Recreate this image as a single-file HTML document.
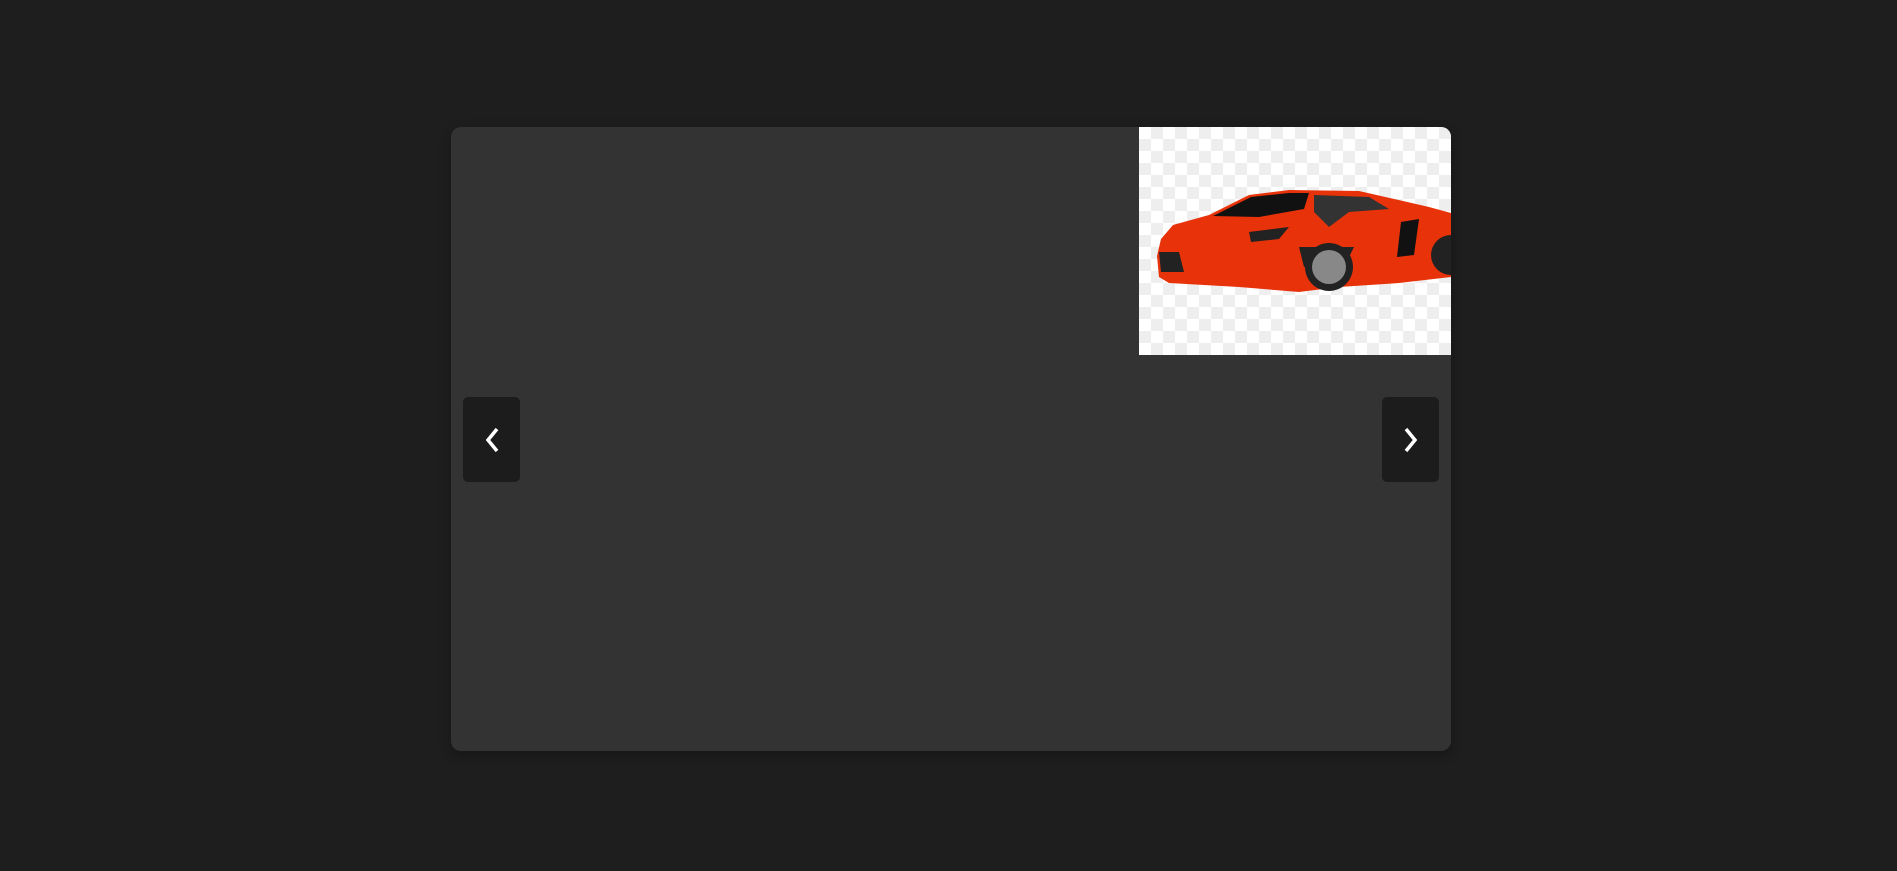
<!DOCTYPE html>
<html><head><style>
html,body{margin:0;padding:0;background:#1e1e1e;width:1897px;height:871px;overflow:hidden;font-family:"Liberation Sans",sans-serif}
.box{position:absolute;left:451px;top:127px;width:1000px;height:624px;background:#333;border-radius:10px;overflow:hidden;box-shadow:0 4px 12px rgba(0,0,0,.3)}
.img{position:absolute;left:688px;top:0;width:312px;height:228px;background-color:#fff;background-image:linear-gradient(45deg,#eee 25%,transparent 25%,transparent 75%,#eee 75%),linear-gradient(45deg,#eee 25%,transparent 25%,transparent 75%,#eee 75%);background-size:24px 24px;background-position:0 0,12px 12px}
.btn{position:absolute;top:270px;width:57px;height:85px;background:#1c1c1c;border-radius:5px}
.btn svg{position:absolute;left:20px;top:30px}
</style></head><body>
<div class="box">
<div class="img">
<svg width="312" height="228" viewBox="0 0 312 228">
<path d="M18 129 L22 112 L34 98 L70 88 L110 68 L150 63 L220 64 L290 80 L312 86 L312 150 L260 156 L200 160 L160 165 L100 160 L30 156 L20 150 Z" fill="#e8320a"/>
<path d="M74 89 L112 70 L150 66 L170 66 L165 82 L120 90 Z" fill="#111"/>
<path d="M175 68 L230 70 L250 82 L210 85 L190 100 L175 85 Z" fill="#333"/>
<path d="M160 120 L215 120 L205 140 L165 140 Z" fill="#222"/>
<path d="M20 125 L40 125 L45 145 L22 145 Z" fill="#222"/>
<path d="M262 95 L280 92 L275 128 L258 130 Z" fill="#111"/>
<circle cx="190" cy="140" r="24" fill="#222"/><circle cx="190" cy="140" r="17" fill="#888"/>
<circle cx="312" cy="128" r="20" fill="#222"/>
<path d="M110 105 L150 100 L140 112 L112 115 Z" fill="#222"/>
</svg>
</div>
<div class="btn" style="left:12px"><svg width="18" height="26" viewBox="0 0 18 26"><path d="M14 2 L5 13 L14 24" fill="none" stroke="#fff" stroke-width="3.5"/></svg></div>
<div class="btn" style="left:931px"><svg width="18" height="26" viewBox="0 0 18 26"><path d="M4 2 L13 13 L4 24" fill="none" stroke="#fff" stroke-width="3.5"/></svg></div>
</div>
</body></html>
